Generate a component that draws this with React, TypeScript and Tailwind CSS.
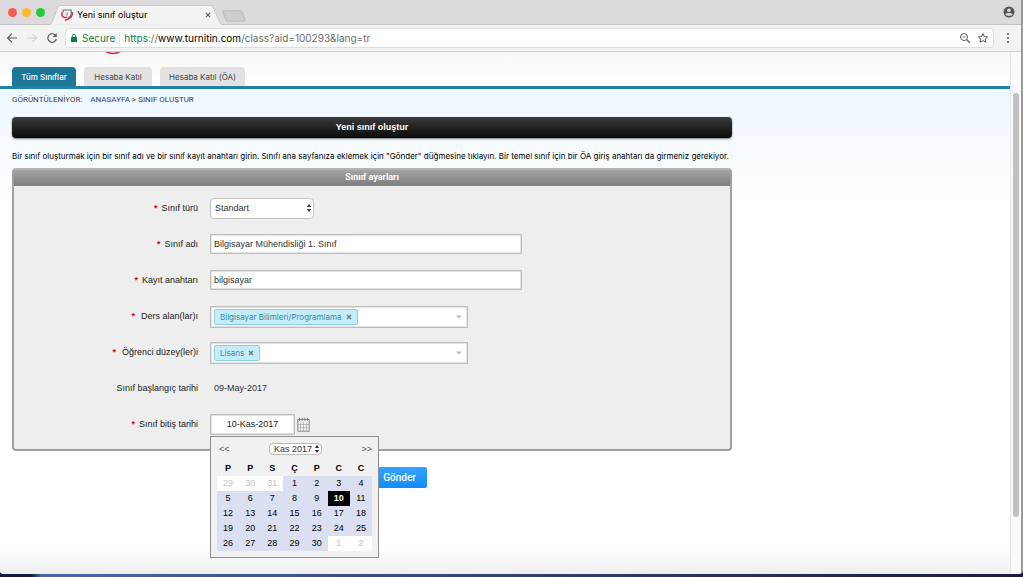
import type { ReactNode } from "react";

const weeks: number[][] = [
  [29, 30, 31, 1, 2, 3, 4],
  [5, 6, 7, 8, 9, 10, 11],
  [12, 13, 14, 15, 16, 17, 18],
  [19, 20, 21, 22, 23, 24, 25],
  [26, 27, 28, 29, 30, 1, 2],
];
const dayNames = ["P", "P", "S", "Ç", "P", "C", "C"];

function isOutside(week: number, day: number) {
  return (week === 0 && day > 7) || (week === 4 && day < 7);
}

function SortArrows() {
  return (
    <svg viewBox="0 0 6 10" className="pointer-events-none absolute inset-y-0 right-0.5 my-auto h-2.5 w-1.5" fill="#333">
      <path d="M3 1 5.2 4H.8zM3 9 .8 6h4.4z" />
    </svg>
  );
}

function TabStrip() {
  return (
    <div className="flex h-6 items-center bg-[#dcdadd] pr-1.5">
      <div className="flex gap-[5px] pl-2">
        <span className="size-[9px] rounded-full bg-[#f55f57]" />
        <span className="size-[9px] rounded-full bg-[#fabc2e]" />
        <span className="size-[9px] rounded-full bg-[#28c83f]" />
      </div>
      <div className="relative ml-1 flex h-6 w-[173px] items-center pt-1.5">
        <svg viewBox="0 0 173 20" preserveAspectRatio="none" className="absolute bottom-[-1px] left-0 h-5 w-full">
          <path d="M0 20 C3 19 3 17 4 15 L9 2 Q10 .5 12 .5 H161 Q163 .5 164 2 L170 16 Q171 19 173 20z" fill="#f3f3f3" stroke="#bdbbbe" strokeWidth=".7" />
          <path d="M1 20H172" stroke="#f3f3f3" strokeWidth="1.5" />
        </svg>
        <svg viewBox="0 0 12 12" className="relative ml-3 size-3 shrink-0" fill="none">
          <path d="M2.300 3V1h7.900v3.800c0 2-1.300 3.300-3.700 4.200" stroke="#5a7580" strokeWidth="1.100" />
          <path d="M5 3.300v3h1.600V3.300" stroke="#8fa5ad" strokeWidth=".8" />
          <path d="M1.300 2.800C0 7.300 2.200 9.300 5.800 8.200M11.400 3.300c.3 4.200-2.500 6.700-7.600 8.100" stroke="#d52b45" strokeWidth="1.500" />
        </svg>
        <span className="relative ml-1 flex-1 whitespace-nowrap text-[9px] leading-3 text-black">Yeni sınıf oluştur</span>
        <button type="button" aria-label="Close tab" className="relative mr-2.5 size-2">
          <svg viewBox="0 0 8 8" className="size-2" stroke="#5c5c5c" strokeWidth="1.100">
            <path d="M1.800 1.800l4.400 4.400M6.200 1.800L1.800 6.200" />
          </svg>
        </button>
      </div>
      <button type="button" aria-label="New tab" className="mt-2">
        <svg viewBox="0 0 24 12" className="h-3 w-6" fill="#cfcdd0" stroke="#b0aeb1" strokeWidth=".8">
          <path d="M1.500 .8H18q1.500 0 2 1.200l3 7.500q.6 1.700-1 1.700H6q-1.500 0-2-1.200L.8 2.200Q.3 .8 1.500 .8z" />
        </svg>
      </button>
      <button type="button" aria-label="Profile" className="ml-auto">
        <svg viewBox="0 0 12 12" className="size-3">
          <circle cx="6" cy="6" r="5.500" fill="#545356" />
          <circle cx="6" cy="4.200" r="1.800" fill="#dcdadd" />
          <path d="M2.300 8.300C3.500 6.400 8.500 6.400 9.700 8.300 8.500 10.300 3.500 10.300 2.300 8.300z" fill="#dcdadd" />
        </svg>
      </button>
    </div>
  );
}

function Toolbar() {
  return (
    <div className="flex h-7 items-center border-t border-b border-t-[#c6c4c7] border-b-[#cfcfcf] bg-[#f3f3f3] pr-[11px]">
      <div className="flex w-[65px] shrink-0 items-center gap-2 pl-1.5">
        <button type="button" aria-label="Back">
          <svg viewBox="0 0 12 12" className="size-3" fill="none" stroke="#5a5a5a" strokeWidth="1.200">
            <path d="M11 6H1.800M6 1.600 1.600 6 6 10.400" />
          </svg>
        </button>
        <button type="button" aria-label="Forward">
          <svg viewBox="0 0 12 12" className="size-3" fill="none" stroke="#d0d0d0" strokeWidth="1.200">
            <path d="M1.500 6h8.700M6.500 2.100 10.400 6 6.500 9.900" />
          </svg>
        </button>
        <button type="button" aria-label="Reload">
          <svg viewBox="0 0 12 12" className="size-3" fill="none" stroke="#5a5a5a" strokeWidth="1.200">
            <path d="M9.800 3.800A4.300 4.300 0 1 0 10.300 7" />
            <path d="M10.700 1v4H6.700z" fill="#5a5a5a" stroke="none" />
          </svg>
        </button>
      </div>
      <div className="flex h-5 min-w-0 flex-1 items-center rounded-sm border border-[#dedede] bg-white px-1 text-[10px] leading-4 whitespace-nowrap">
        <svg viewBox="0 0 8 10" className="h-2.5 w-2 shrink-0">
          <rect x="1" y="4" width="6" height="5" rx=".6" fill="#0b8043" />
          <path d="M2.400 4V2.800a1.600 1.600 0 0 1 3.200 0V4" fill="none" stroke="#0b8043" strokeWidth="1" />
        </svg>
        <span className="ml-1 text-[#0b8043]">Secure</span>
        <span className="mx-1 h-3 w-px bg-[#e4e4e4]" />
        <span className="flex-1 text-[#6c6c6c]">
          <span className="text-[#0b8043]">https</span>://<span className="text-black">www.turnitin.com</span>/class?aid=100293&amp;lang=tr
        </span>
        <button type="button" aria-label="Zoom">
          <svg viewBox="0 0 12 12" className="size-3" fill="none" stroke="#5a5a5a" strokeWidth="1">
            <circle cx="5" cy="5" r="3.500" />
            <path d="M7.600 7.600 10.800 10.800" strokeWidth="1.300" />
            <path d="M3.500 5h3" strokeWidth=".8" />
          </svg>
        </button>
        <button type="button" aria-label="Bookmark" className="ml-1.5">
          <svg viewBox="0 0 12 12" className="size-3" fill="none" stroke="#5a5a5a" strokeWidth="1">
            <path d="M6 1.500 7.300 4.600 10.600 4.900 8.100 7.100 8.900 10.300 6 8.600 3.100 10.300 3.900 7.100 1.400 4.900 4.700 4.600z" />
          </svg>
        </button>
      </div>
      <button type="button" aria-label="Menu" className="ml-3">
        <svg viewBox="0 0 4 12" className="h-3 w-1" fill="#5a5a5a">
          <circle cx="2" cy="2" r="1.100" />
          <circle cx="2" cy="6" r="1.100" />
          <circle cx="2" cy="10" r="1.100" />
        </svg>
      </button>
    </div>
  );
}

function Row({ label, htmlFor, required, wide, children }: { label: string; htmlFor: string; required?: boolean; wide?: boolean; children: ReactNode }) {
  return (
    <div className="flex h-9 items-center gap-3">
      <label htmlFor={htmlFor} className={`flex w-46 shrink-0 justify-end ${wide ? "gap-1.5" : "gap-1"}`}>
        {required && <span className="font-bold text-[#e0001b]">*</span>}
        {label}
      </label>
      {children}
    </div>
  );
}

function TokenField({ id, value }: { id: string; value: string }) {
  return (
    <div id={id} className="mt-0.5 flex h-[22px] w-[258px] items-center justify-between border border-[#bdbdbd] bg-white pr-[5px] pl-[3px] shadow-[inset_0_0_0_1px_#e2e2e2]">
      <span className="flex h-4 items-center gap-1 rounded-xs border border-[#8ccfe4] bg-[#c4edfa] px-[5px] font-[Inter,sans-serif] text-[8px] text-[#4588a3]">
        {value}
        <button type="button" aria-label={`${value} kaldır`}>
          <svg viewBox="0 0 6 6" className="size-1.5" stroke="#6b7f87" strokeWidth="1.500">
            <path d="M1 1l4 4M5 1 1 5" />
          </svg>
        </button>
      </span>
      <svg viewBox="0 0 6 4" className="h-1 w-1.5" fill="#bbb">
        <path d="M0 .5h6L3 3.500z" />
      </svg>
    </div>
  );
}

function Calendar() {
  return (
    <div className="absolute top-full left-0 z-10 mt-px w-[169px] border border-[#909090] bg-[#f1f1f1] px-1.5 pt-1.5 pb-1.5 text-black">
      <div className="mb-1.5 flex h-3 items-center justify-between pl-0.5 text-[9px] text-[#555]">
        <button type="button" aria-label="Önceki ay">&lt;&lt;</button>
        <span className="relative">
          <select aria-label="Ay" className="block h-3 w-[53px] appearance-none rounded-sm border border-[#bbb] bg-white pl-1 text-[9px] leading-[11px] text-[#333]">
            <option>Kas 2017</option>
          </select>
          <SortArrows />
        </span>
        <button type="button" aria-label="Sonraki ay">&gt;&gt;</button>
      </div>
      <table className="w-full table-fixed border-collapse text-center text-[9px] leading-none">
        <thead>
          <tr className="h-[15px]">
            {dayNames.map((d, i) => (
              <th key={i} className="p-0 font-bold">{d}</th>
            ))}
          </tr>
        </thead>
        <tbody>
          {weeks.map((week, w) => (
            <tr key={w} className="h-[15px]">
              {week.map((day, i) => (
                <td
                  key={i}
                  className={
                    isOutside(w, day)
                      ? "bg-white p-0 text-[#c4c4c4]"
                      : day === 10
                        ? "bg-black p-0 font-bold text-white"
                        : "bg-[#dae0f2] p-0"
                  }
                >
                  {day}
                </td>
              ))}
            </tr>
          ))}
        </tbody>
      </table>
    </div>
  );
}

function ClassForm() {
  const field = "h-5 w-[312px] border border-[#bdbdbd] bg-white px-[3px] text-[9px] text-[#333] shadow-[inset_0_0_0_1px_#e2e2e2]";
  return (
    <form className="w-[720px] max-w-full">
      <h1 className="flex h-[21px] items-center justify-center rounded-sm bg-linear-to-b from-[#3c3c3c] to-[#0c0c0c] text-[9px] font-bold text-white shadow-[0_1px_2px_#777]">
        Yeni sınıf oluştur
      </h1>
      <p className="mt-3 font-[Inter,sans-serif] text-[8px] leading-3 text-black">
        Bir sınıf oluşturmak için bir sınıf adı ve bir sınıf kayıt anahtarı girin. Sınıfı ana sayfanıza eklemek için "Gönder" düğmesine tıklayın. Bir temel sınıf için bir ÖA giriş anahtarı da girmeniz gerekiyor.
      </p>
      <section className="mt-1.5 rounded-sm border-2 border-[#a0a0a0] border-t-[#b4b4b4] bg-[#eee] pb-[7px]">
        <h2 className="flex h-4 items-center justify-center bg-linear-to-b from-[#a4a4a4] to-[#7e7e7e] font-[Roboto,sans-serif] text-[9px] font-bold text-white">
          Sınııf ayarları
        </h2>
        <div className="pt-1 text-[9px] leading-3 text-[#222]">
          <Row label="Sınıf türü" htmlFor="type" required>
            <span className="relative">
              <select id="type" className="block h-[21px] w-26 appearance-none rounded-sm border border-[#c4c4c4] bg-white pl-1 text-[9px] text-[#333]">
                <option>Standart</option>
              </select>
              <SortArrows />
            </span>
          </Row>
          <Row label="Sınıf adı" htmlFor="name" required>
            <input id="name" defaultValue="Bilgisayar Mühendisliği 1. Sınıf" className={field} />
          </Row>
          <Row label="Kayıt anahtarı" htmlFor="key" required>
            <input id="key" defaultValue="bilgisayar" className={field} />
          </Row>
          <Row label="Ders alan(lar)ı" htmlFor="subject" required wide>
            <TokenField id="subject" value="Bilgisayar Bilimleri/Programlama" />
          </Row>
          <Row label="Öğrenci düzey(ler)i" htmlFor="level" required wide>
            <TokenField id="level" value="Lisans" />
          </Row>
          <Row label="Sınıf başlangıç tarihi" htmlFor="start">
            <output id="start" className="pl-1 text-[#333]">09-May-2017</output>
          </Row>
          <Row label="Sınıf bitiş tarihi" htmlFor="end" required>
            <div className="relative flex items-center gap-0.5">
              <input id="end" defaultValue="10-Kas-2017" className="h-[21px] w-[85px] border border-[#bdbdbd] bg-white text-center text-[9px] text-[#222] shadow-[inset_0_0_0_1px_#e2e2e2]" />
              <button type="button" aria-label="Takvim">
                <svg viewBox="0 0 13 15" className="h-[15px] w-[13px]" fill="none" stroke="#888">
                  <rect x=".8" y="2.500" width="11.400" height="11.700" fill="#f5f5f5" strokeWidth="1" />
                  <path d="M3.600 5v9M6.500 5v9M9.400 5v9M1 7.500h11M1 10.800h11" strokeWidth=".5" />
                  <path d="M2.500 .8v3M5.200 .8v3M7.900 .8v3M10.600 .8v3" strokeWidth="1" stroke="#777" />
                </svg>
              </button>
              <Calendar />
            </div>
          </Row>
        </div>
      </section>
      <div className="mt-4 grid grid-cols-2">
        <button type="button" className="col-start-2 h-[21px] w-[55px] rounded-xs bg-linear-to-b from-[#34a2ff] to-[#118dfb] font-[Roboto,sans-serif] text-[10px] font-medium text-white">
          Gönder
        </button>
      </div>
    </form>
  );
}

export default function App() {
  return (
    <div className="flex h-screen flex-col overflow-hidden bg-linear-to-r from-[#141c38] from-3% via-[#4a68a8] via-4% to-[#1a1b3c] font-['Liberation_Sans',Arial,sans-serif]">
      <div className="flex min-h-0 flex-1 flex-col overflow-hidden rounded-b-sm border-r-2 border-[#9a9a9a] bg-white">
        <header className="font-[Inter,sans-serif]">
          <TabStrip />
          <Toolbar />
        </header>
        <div className="flex min-h-0 flex-1">
          <main className="flex min-w-0 flex-1 flex-col overflow-hidden">
            <nav className="relative flex h-[34px] items-end gap-2 bg-linear-to-b from-[#f8f8f8] to-white px-3 font-[Inter,sans-serif] text-[8px]">
              <svg viewBox="0 0 16 3" className="absolute top-0 left-[105px] h-[3px] w-4" fill="none">
                <path d="M1 -.5Q8 3.500 15 -.5" stroke="#d4213d" strokeWidth="1.600" />
              </svg>
              <a href="#all" className="flex h-[19px] w-16 items-center justify-center rounded-t-sm bg-[#1b7698] font-medium text-white">Tüm Sınıflar</a>
              <a href="#join" className="flex h-[19px] w-17 items-center justify-center rounded-t-sm bg-[#e2e2e2] text-[#444]">Hesaba Katıl</a>
              <a href="#join-ta" className="flex h-[19px] w-[85px] items-center justify-center rounded-t-sm bg-[#e2e2e2] text-[#444]">Hesaba Katıl (ÖA)</a>
            </nav>
            <div className="min-h-0 flex-1 border-t-[3px] border-[#2481a3] bg-linear-to-b from-[#edf6ff] to-white to-25% px-3 pt-[5px]">
              <nav className="mb-[11px] flex h-3 items-center font-[Roboto,sans-serif] text-[8px] text-[#444]">
                <span className="mr-2">GÖRÜNTÜLENİYOR:</span>
                <a href="#home" className="text-[#1d4b8f]">ANASAYFA</a>
                <span className="mx-0.5">&gt;</span>
                <span>SINIF OLUŞTUR</span>
              </nav>
              <ClassForm />
            </div>
            <div className="h-7 shrink-0 bg-linear-to-b from-white to-[#efefef]" />
          </main>
          <div className="flex w-[11px] flex-col items-center border-l border-[#e6e6e6] bg-[#fafafa] pt-[41px]">
            <div className="h-[424px] w-1.5 rounded-full bg-[#c1c1c1]" />
          </div>
        </div>
      </div>
      <div className="h-[3px] shrink-0" />
    </div>
  );
}
